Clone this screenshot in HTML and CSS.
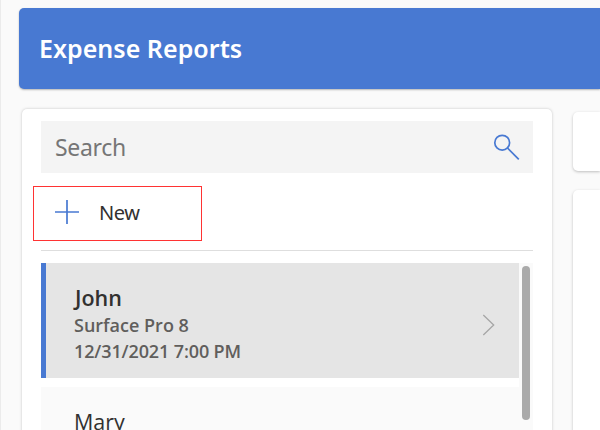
FILE: index.html
```html
<!DOCTYPE html>
<html lang="en">
<head>
<meta charset="utf-8">
<title>Expense Reports</title>
<link rel="stylesheet" href="styles.css">
</head>
<body>
<div class="app">
  <header class="header"><h1 class="title">Expense Reports</h1></header>
  <main class="columns">
    <section class="panel">
      <div class="search">
        <span class="search-label">Search</span>
        <svg class="search-icon" width="28" height="28" viewBox="0 0 28 28" fill="none" stroke="#4879d2" stroke-width="1.7"><circle cx="9.2" cy="9.7" r="7.4"/><path d="M14.5 15 25.8 26.3"/></svg>
      </div>
      <div class="new">
        <svg class="plus" width="24" height="24" viewBox="0 0 24 24" stroke="#4879d2" stroke-width="1.7"><path d="M0 12H24M12 0V24"/></svg>
        <span class="new-label">New</span>
      </div>
      <div class="gallery">
        <div class="items">
          <article class="item selected">
            <div class="details">
              <div class="name">John</div>
              <div class="line product">Surface Pro 8</div>
              <div class="line date">12/31/2021 7:00 PM</div>
            </div>
            <svg class="chevron" width="14" height="22" viewBox="0 0 14 22" fill="none" stroke="#a6a6a6" stroke-width="1.3"><path d="M1.3 1 11.7 11 1.3 21"/></svg>
          </article>
          <article class="item">
            <div class="details"><div class="name">Mary</div></div>
          </article>
        </div>
        <div class="track"><div class="thumb"></div></div>
      </div>
    </section>
    <aside class="side">
      <div class="card toolbar"></div>
      <div class="card form"></div>
    </aside>
  </main>
</div>
</body>
</html>
```
FILE: styles.css
```css
* { box-sizing: border-box; }
body { margin: 0; background: #fafafa; font-family: "Open Sans", "Noto Sans", sans-serif; color: #323130; }
.app { width: 600px; height: 430px; overflow: hidden; border-left: 1px solid #ebebeb; padding: 8px 0 0 18px; }
.header { height: 81px; background: #4879d2; border-radius: 5px 0 0 5px; box-shadow: 0 1px 2px rgba(0,0,0,.28); display: flex; align-items: center; padding-left: 20px; }
.title { margin: -2px 0 0; font: 600 25px/34px "Noto Sans", sans-serif; letter-spacing: .03px; color: #fff; white-space: nowrap; }
.columns { display: flex; align-items: flex-start; gap: 21px; padding: 20px 0 0 3px; }
.panel { width: 530px; height: 350px; flex: none; background: #fff; border-radius: 5px; box-shadow: 0 0 3px rgba(0,0,0,.22); padding: 12px 19px 0; }
.search { height: 52px; background: #f4f4f4; display: flex; align-items: center; justify-content: space-between; padding: 0 12px 0 14px; }
.search-label { font: 400 23px/32px "Noto Sans", sans-serif; letter-spacing: -.3px; color: #767676; }
.new { width: 169px; height: 55px; margin: 13px 0 0 -8px; border: 1px solid #f33; display: flex; align-items: center; padding-left: 21px; gap: 20px; }
.plus { margin-top: -4px; }
.new-label { margin-top: -2px; font: 400 20px/28px "Noto Sans", sans-serif; letter-spacing: -.4px; }
.gallery { margin-top: 9px; border-top: 1px solid #dedede; padding-top: 12px; display: flex; }
.items { width: 478px; }
.item { height: 115px; margin-bottom: 9px; padding: 20px 23px 0 33px; background: #fafafa; display: flex; justify-content: space-between; }
.selected { background: #e5e5e5; border-left: 5px solid #4879d2; padding-left: 28px; }
.name { font-size: 21.5px; line-height: 29px; }
.selected .name { font-weight: 600; padding-left: 1px; }
.line { font-size: 18px; font-weight: 600; line-height: 26px; color: #605e5c; white-space: nowrap; }
.date { letter-spacing: -.12px; }
.chevron { margin-top: 31px; }
.track { width: 14px; height: 180px; background: #fafafa; padding: 3px 3px 0; }
.thumb { width: 8px; height: 154px; border-radius: 4px; background: #aaa; }
.side { flex: 1; display: flex; flex-direction: column; gap: 19px; padding-top: 3px; }
.card { background: #fff; border-radius: 5px 0 0 5px; box-shadow: 0 1px 3px rgba(0,0,0,.24); }
.toolbar { height: 59px; }
.form { height: 260px; }
```
